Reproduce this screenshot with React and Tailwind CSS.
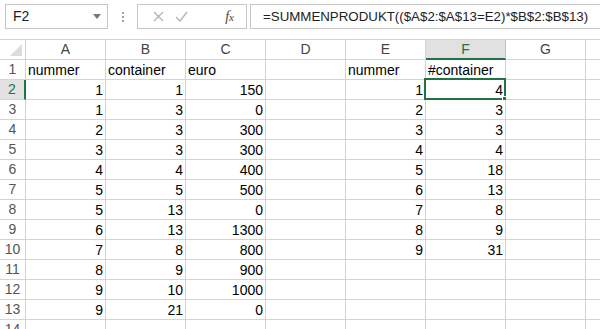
import React from 'react';

const cols = ['A', 'B', 'C', 'D', 'E', 'F', 'G', ''];

const rows = [
  ['nummer', 'container', 'euro', '', 'nummer', '#container'],
  [1, 1, 150, '', 1, 4],
  [1, 3, 0, '', 2, 3],
  [2, 3, 300, '', 3, 3],
  [3, 3, 300, '', 4, 4],
  [4, 4, 400, '', 5, 18],
  [5, 5, 500, '', 6, 13],
  [5, 13, 0, '', 7, 8],
  [6, 13, 1300, '', 8, 9],
  [7, 8, 800, '', 9, 31],
  [8, 9, 900],
  [9, 10, 1000],
  [9, 21, 0],
  [],
];

const Cell = ({ value, selected }) => {
  const isNum = typeof value === 'number';
  return (
    <div
      className={`relative w-[80px] shrink-0 h-[20px] border-r border-b border-[#d4d4d4] flex items-end px-[2px] ${
        isNum ? 'justify-end' : 'justify-start'
      }`}
    >
      <span className="leading-[17px] text-black whitespace-nowrap">{value}</span>
      {selected && (
        <div className="absolute -top-[2px] -left-[2px] w-[82px] h-[22px] border-2 border-[#217346]">
          <div className="absolute -right-[3px] -bottom-[3px] w-[5px] h-[5px] bg-[#217346] border border-white" />
        </div>
      )}
    </div>
  );
};

export default function App() {
  return (
    <div
      className="w-[600px] h-[329px] overflow-hidden bg-white text-[14px]"
      style={{ fontFamily: '"Liberation Sans", Arial, sans-serif' }}
    >
      {/* Formula bar */}
      <div className="h-[40px] flex items-start pt-[4px] border-b border-[#d4d4d4]">
        <div className="ml-[5px] w-[103px] h-[25px] border border-[#c6c6c6] flex items-center justify-between pl-[7px] pr-[6px]">
          <span className="text-[#222]">F2</span>
          <svg width="8" height="5" viewBox="0 0 8 5">
            <path d="M0 0h8L4 5z" fill="#777" />
          </svg>
        </div>
        <div className="w-[29px] h-[25px] flex flex-col items-center justify-center gap-[2px]">
          <span className="w-[2px] h-[2px] bg-[#a0a0a0]" />
          <span className="w-[2px] h-[2px] bg-[#a0a0a0]" />
          <span className="w-[2px] h-[2px] bg-[#a0a0a0]" />
        </div>
        <div className="w-[110px] h-[25px] border border-[#c6c6c6] flex items-center pl-[15px] pr-[12px]">
          <svg width="11" height="11" viewBox="0 0 11 11">
            <path d="M1 1l9 9M10 1l-9 9" stroke="#b5b5b5" strokeWidth="1.4" />
          </svg>
          <svg width="13" height="11" viewBox="0 0 13 11" className="ml-[11px]">
            <path d="M1 6l4 4 7-9" stroke="#b5b5b5" strokeWidth="1.4" fill="none" />
          </svg>
          <span
            className="ml-auto italic text-[#444] text-[14px]"
            style={{ fontFamily: '"Liberation Serif", serif' }}
          >
            f<span className="text-[11px]">x</span>
          </span>
        </div>
        <div className="ml-[3px] flex-1 h-[25px] border border-r-0 border-[#c6c6c6] flex items-center pl-[12px]">
          <span className="text-[13.3px] text-[#222] whitespace-nowrap">
            =SUMMENPRODUKT(($A$2:$A$13=E2)*$B$2:$B$13)
          </span>
        </div>
      </div>

      {/* Column headers */}
      <div className="flex h-[20px]">
        <div className="w-[26px] shrink-0 h-[20px] border-r border-b border-[#d4d4d4] relative">
          <svg width="12" height="12" viewBox="0 0 12 12" className="absolute left-[10px] top-[4px]">
            <path d="M12 0v12H0z" fill="#dcdcdc" />
          </svg>
        </div>
        {cols.map((c, j) => (
          <div
            key={j}
            className={`w-[80px] shrink-0 h-[20px] border-r flex items-center justify-center ${
              c === 'F'
                ? 'bg-[#e1e1e1] text-[#217346] border-b-2 border-b-[#217346] border-r-[#c6c6c6]'
                : 'text-[#444] border-b border-[#d4d4d4]'
            }`}
          >
            {c}
          </div>
        ))}
      </div>

      {/* Rows */}
      {rows.map((r, i) => {
        const n = i + 1;
        return (
          <div key={n} className="flex h-[20px]">
            <div
              className={`w-[26px] shrink-0 h-[20px] border-b border-[#d4d4d4] flex items-center justify-center ${
                n === 2
                  ? 'bg-[#e1e1e1] text-[#217346] border-r-2 border-r-[#217346]'
                  : 'text-[#555] border-r'
              }`}
            >
              {n}
            </div>
            {cols.map((c, j) => (
              <Cell key={j} value={r[j]} selected={n === 2 && c === 'F'} />
            ))}
          </div>
        );
      })}
    </div>
  );
}
